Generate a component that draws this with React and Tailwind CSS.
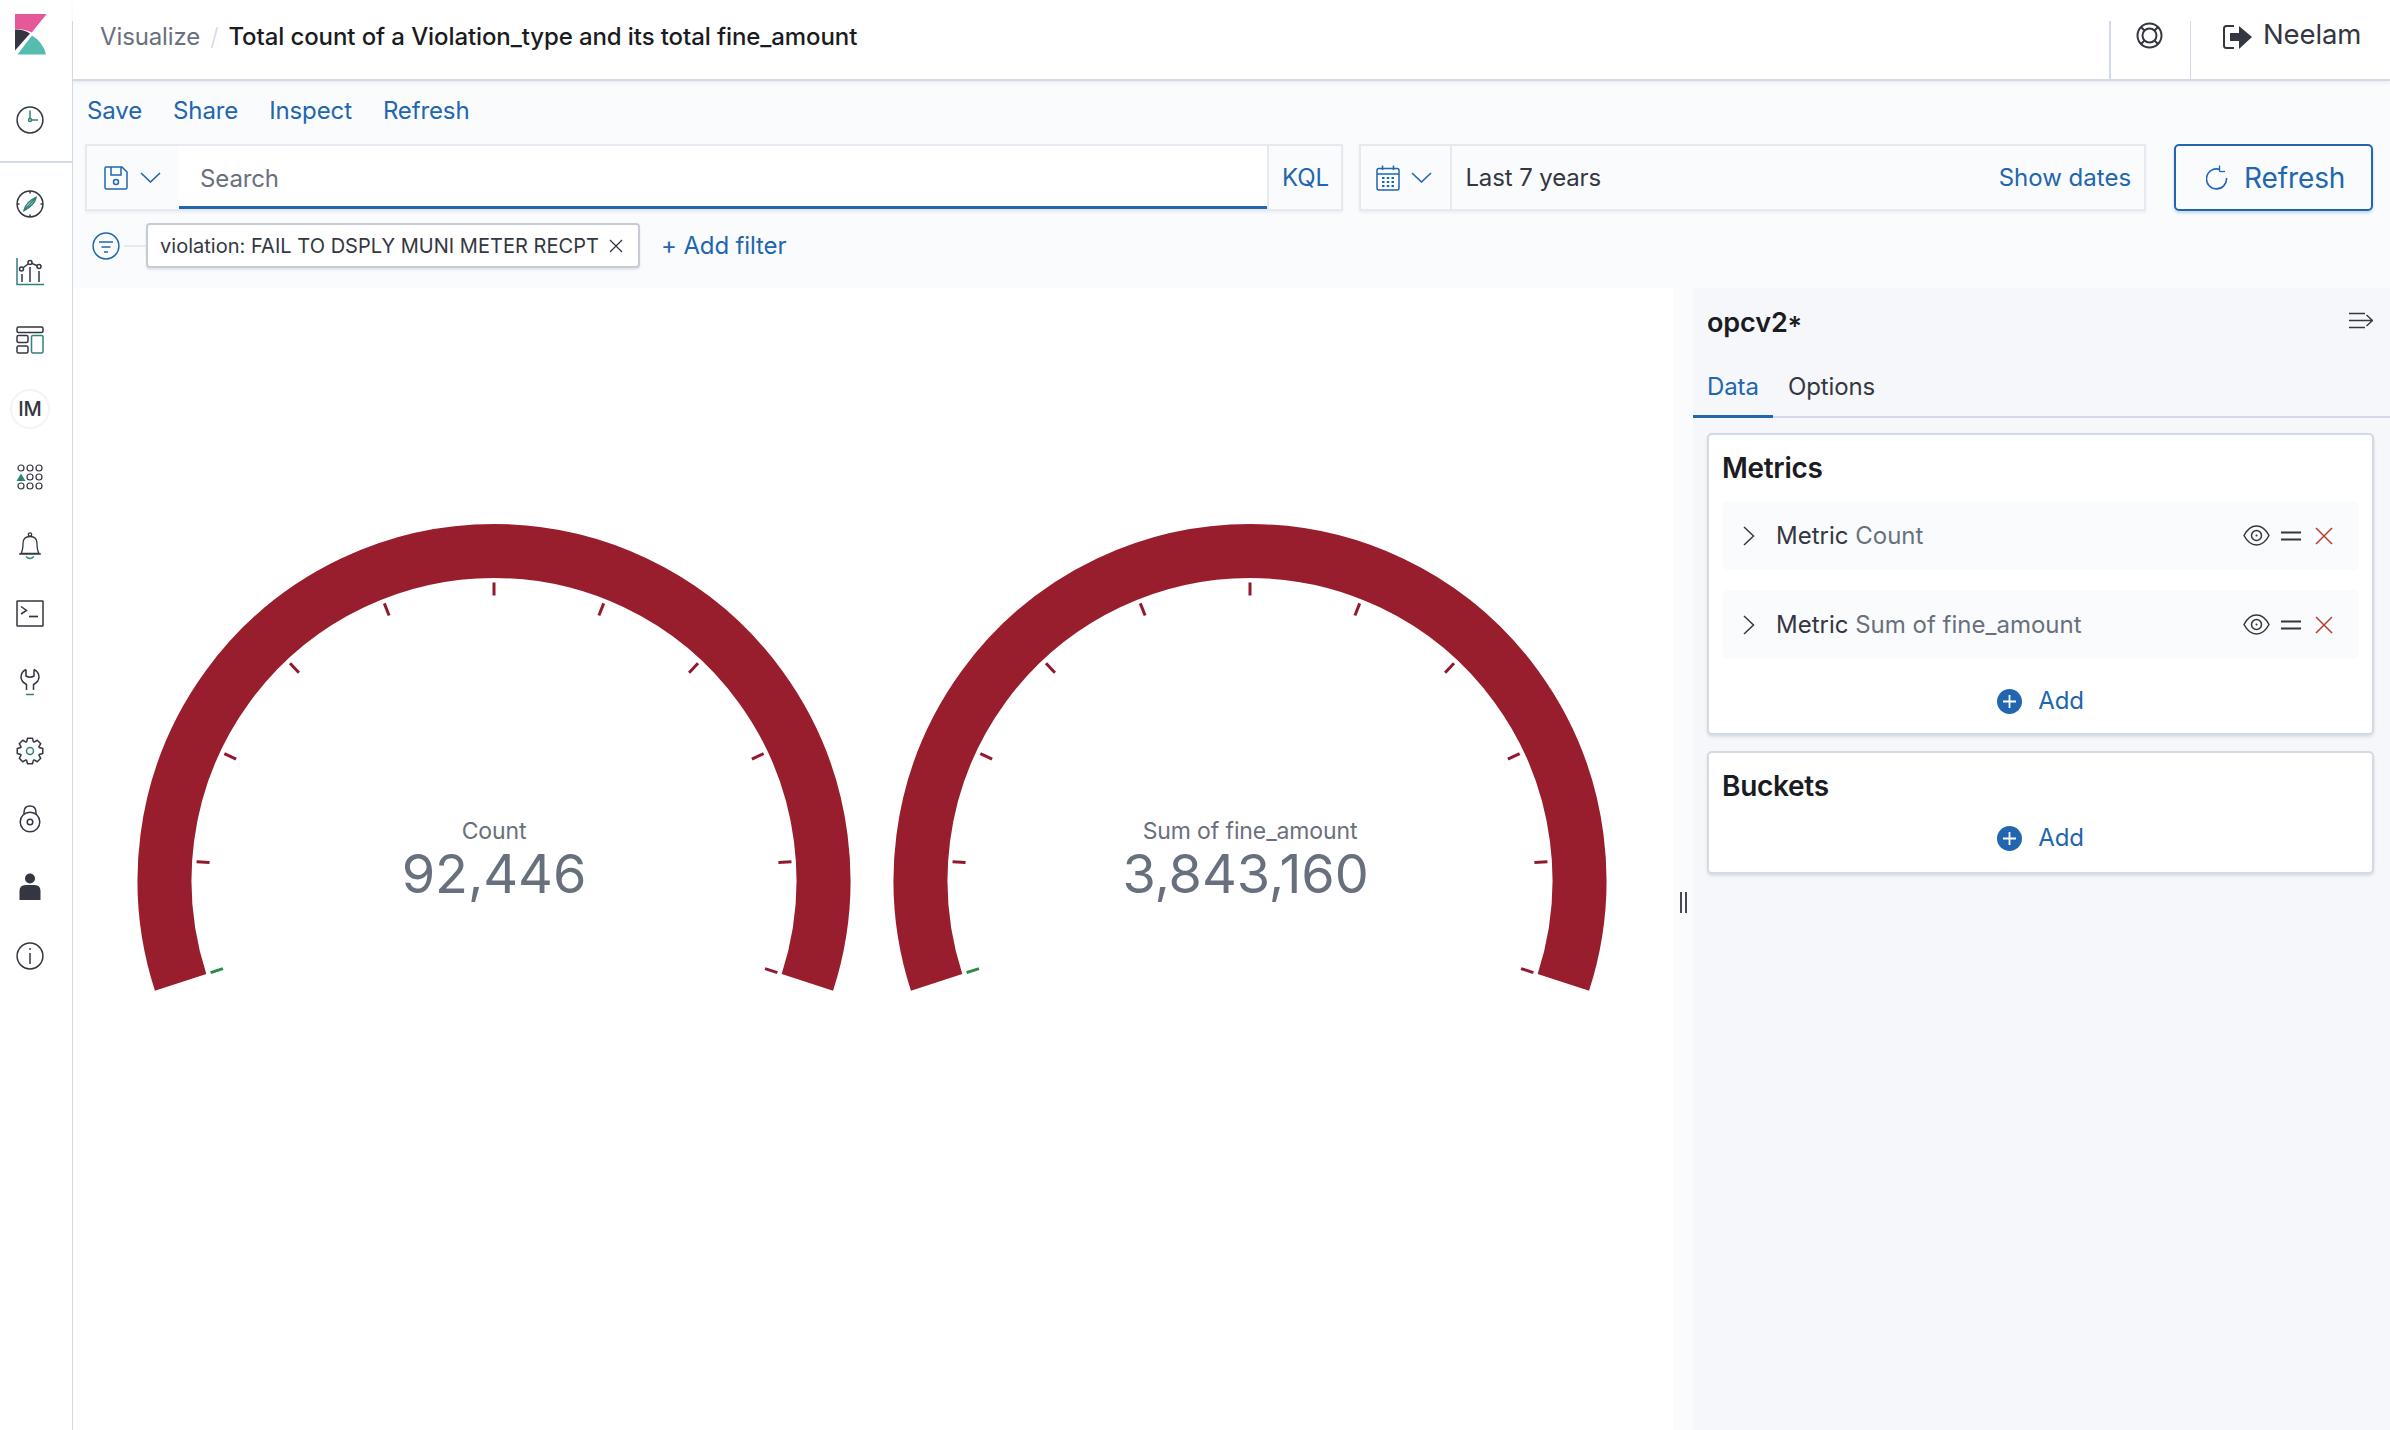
import React from 'react';

const DARK = '#343741';
const TEAL = '#2f8378';
const BLUE = '#2166ae';

function Logo() {
  return (
    <svg width="32" height="41" viewBox="15 14 32 41" className="block">
      <path d="M15 14H46.7L31.7 32.6Q24 28.5 15 29Z" fill="#e5589a" />
      <path d="M15 29.6Q23 29 30 33.5L15 50.5Z" fill="#343741" />
      <path d="M17.4 54.5L32 35.6Q43 42 46 54.5Z" fill="#55bdb0" />
    </svg>
  );
}

const Ico = ({ children, w = 28, h = 28, vb = '0 0 28 28', sw = '1.5' }) => (
  <svg width={w} height={h} viewBox={vb} fill="none" stroke={DARK} strokeWidth={sw} className="block">
    {children}
  </svg>
);

const ClockIcon = () => (
  <Ico>
    <circle cx="14" cy="14" r="12.9" />
    <path d="M14 4.5V13M15.5 14H22" stroke={TEAL} />
    <circle cx="14" cy="14" r="1.5" stroke={TEAL} />
  </Ico>
);
const CompassIcon = () => (
  <Ico>
    <circle cx="14" cy="14" r="12.9" />
    <path d="M14 1v2.500M14 24.500V27M1 14h2.500M24.500 14H27" />
    <path d="M20 7.500Q18.500 15 8 20.500Q10 12 20 7.500Z" stroke={TEAL} />
    <path d="M20 7.500L8 20.500" stroke={TEAL} />
  </Ico>
);
const ChartIcon = () => (
  <Ico>
    <path d="M1 0V26.500H28" stroke={TEAL} />
    <path d="M5.500 11L14 4.500L23 8.500" />
    <circle cx="5.500" cy="11" r="2" fill="#fff" />
    <circle cx="14" cy="4.500" r="2" fill="#fff" />
    <circle cx="23" cy="8.500" r="2" fill="#fff" />
    <path d="M6 16V24M14 9V24M23 13V24" />
  </Ico>
);
const DashIcon = () => (
  <Ico>
    <rect x="1" y="1" width="26" height="5.500" rx="1.500" />
    <rect x="1" y="9.500" width="11" height="7" rx="1.500" />
    <rect x="1" y="20" width="11" height="7" rx="1.500" />
    <rect x="15.500" y="9.500" width="11.500" height="17.500" rx="1.500" stroke={TEAL} />
  </Ico>
);
const GridIcon = () => (
  <Ico sw="1.2">
    {[[14, 5], [23, 5], [14, 14], [23, 14], [5, 23], [14, 23], [23, 23], [5, 5]].map(([x, y]) => (
      <circle key={x + '-' + y} cx={x} cy={y} r="3" />
    ))}
    <path d="M5 10.500L9.500 18H0.500Z" fill={TEAL} stroke="none" />
  </Ico>
);
const BellIcon = () => (
  <Ico sw="1.3">
    <circle cx="14" cy="2.500" r="1.700" />
    <path d="M5 21.500Q7 18 7 11.500Q7 4.500 14 4.500Q21 4.500 21 11.500Q21 18 23 21.500Z" />
    <path d="M3 22H25" />
    <path d="M10 24.500Q14 28.500 18 24.500" stroke={TEAL} />
  </Ico>
);
const TerminalIcon = () => (
  <Ico>
    <rect x="1" y="1" width="26" height="25" rx="0.500" />
    <path d="M5 6.500L10.500 10.500L5 14" />
    <path d="M13 16.500H22" strokeWidth="1.700" />
  </Ico>
);
const WrenchIcon = () => (
  <Ico>
    <path d="M10 1.500Q5 4 5 9Q5 13.500 10.500 16.500V22M18 1.500Q23 4 23 9Q23 13.500 17.500 16.500V22M10 1.500V8Q14 10.500 18 8V1.500" />
    <path d="M10 26.500H18" stroke={TEAL} />
  </Ico>
);
function gearPath() {
  const pts = [];
  for (let i = 0; i < 8; i++) {
    const a = (i * Math.PI) / 4 - Math.PI / 2;
    const at = (r, d) => `${(14 + r * Math.cos(a + d)).toFixed(2)} ${(14 + r * Math.sin(a + d)).toFixed(2)}`;
    pts.push(at(9.800, -0.36), at(13, -0.19), at(13, 0.19), at(9.800, 0.36));
  }
  return 'M' + pts.join('L') + 'Z';
}
const GearIcon = () => (
  <Ico>
    <path d={gearPath()} strokeLinejoin="round" />
    <circle cx="14" cy="14" r="3.500" stroke={TEAL} />
  </Ico>
);
const LockIcon = () => (
  <Ico>
    <path d="M8 9V7.500Q8 1 14 1Q20 1 20 7.500V9" />
    <circle cx="14" cy="17" r="9.800" />
    <circle cx="14" cy="17" r="2.800" />
  </Ico>
);
const UserIcon = () => (
  <svg width="28" height="28" viewBox="0 0 28 28" fill={DARK} className="block">
    <circle cx="14" cy="5.500" r="5" />
    <path d="M3.500 27V18Q3.500 12 9.500 12H18.500Q24.500 12 24.500 18V27Z" />
  </svg>
);
const InfoIcon = () => (
  <Ico>
    <circle cx="14" cy="14" r="12.900" />
    <path d="M14 11V22" />
    <circle cx="14" cy="7" r="0.900" fill={DARK} stroke="none" />
  </Ico>
);
const HelpIcon = () => (
  <svg width="27" height="27" viewBox="0 0 27 27" fill="none" stroke={DARK} strokeWidth="2" className="block">
    <circle cx="13.500" cy="13.500" r="12" />
    <circle cx="13.500" cy="13.500" r="7" />
    <path d="M5 5L8.500 8.500M22 5L18.500 8.500M5 22L8.500 18.500M22 22L18.500 18.500" />
  </svg>
);
const LogoutIcon = () => (
  <svg width="31" height="28" viewBox="0 0 31 28" fill="none" className="block">
    <path d="M12 3H4.500Q2 3 2 5.500V22.500Q2 25 4.500 25H12" stroke={DARK} strokeWidth="2" />
    <path d="M8 10H17V3L30 14L17 26V18H8Z" fill={DARK} />
  </svg>
);
const Chevron = ({ w = 21, h = 11, color = BLUE }) => (
  <svg width={w} height={h} viewBox="0 0 21 11" fill="none" stroke={color} strokeWidth="1.600" className="block">
    <path d="M1 1L10.500 10L20 1" />
  </svg>
);
const SaveIcon = () => (
  <svg width="24" height="24" viewBox="0 0 24 24" fill="none" stroke={BLUE} strokeWidth="1.500" className="block">
    <path d="M2 1H18L23 6V21.500Q23 23 21.500 23H2.500Q1 23 1 21.500V2Q1 1 2 1Z" />
    <path d="M7 1V9H17V1" />
    <circle cx="12" cy="16" r="2.500" />
  </svg>
);
const CalIcon = () => (
  <svg width="24" height="26" viewBox="0 0 24 26" fill="none" stroke={BLUE} strokeWidth="1.500" className="block">
    <rect x="1" y="3.500" width="22" height="21.500" rx="2" />
    <path d="M1 9H23M6.500 0.500V5M17.500 0.500V5" />
    <path d="M6 13H18M6 17H18M6 21H18" strokeWidth="2.200" strokeDasharray="2.500 2.250" />
  </svg>
);
const FilterIcon = () => (
  <svg width="28" height="28" viewBox="0 0 28 28" fill="none" stroke={BLUE} strokeWidth="1.500" className="block">
    <circle cx="14" cy="14" r="12.900" />
    <path d="M7 10H21M9.500 15H18.500M12 20H16" />
  </svg>
);
const CloseSmall = () => (
  <svg width="14" height="14" viewBox="0 0 14 14" fill="none" stroke={DARK} strokeWidth="1.300" className="block">
    <path d="M1 1L13 13M13 1L1 13" />
  </svg>
);
const RefreshIcon = () => (
  <svg width="22" height="26" viewBox="0 0 22 26" fill="none" stroke={BLUE} strokeWidth="1.600" className="block">
    <path d="M14 4.500A10 10 0 1 0 20.500 13" />
    <path d="M13.500 0.500V6.500" strokeWidth="1.300" />
    <path d="M13.500 6.500H19" strokeWidth="1.300" />
  </svg>
);
const CollapseIcon = () => (
  <svg width="25" height="17" viewBox="0 0 25 17" fill="none" stroke={DARK} strokeWidth="1.400" className="block">
    <path d="M1 1.500H17M1 8.500H24M1 15.500H17M18.500 3L24.500 8.500L18.500 14" />
  </svg>
);
const RowChevron = () => (
  <svg width="12" height="20" viewBox="0 0 12 20" fill="none" stroke={DARK} strokeWidth="1.500" className="block">
    <path d="M1 1L10.500 10L1 19" />
  </svg>
);
const EyeIcon = () => (
  <svg width="27" height="21" viewBox="0 0 27 21" fill="none" stroke={DARK} strokeWidth="1.500" className="block">
    <path d="M1 10.500Q6 1 13.500 1Q21 1 26 10.500Q21 20 13.500 20Q6 20 1 10.500Z" />
    <circle cx="13.500" cy="10.500" r="5" />
    <circle cx="13.500" cy="10.500" r="1" fill={DARK} stroke="none" />
  </svg>
);
const DragIcon = () => (
  <svg width="20" height="10" viewBox="0 0 20 10" fill="none" stroke={DARK} strokeWidth="1.800" className="block">
    <path d="M0 1.500H20M0 8.500H20" />
  </svg>
);
const RemoveIcon = () => (
  <svg width="18" height="18" viewBox="0 0 18 18" fill="none" stroke="#bd3a2c" strokeWidth="1.500" className="block">
    <path d="M1 1L17 17M17 1L1 17" />
  </svg>
);
const PlusCircle = () => (
  <svg width="25" height="25" viewBox="0 0 25 25" className="block">
    <circle cx="12.500" cy="12.500" r="12.500" fill={BLUE} />
    <path d="M12.500 6V19M6 12.500H19" stroke="#fff" strokeWidth="1.800" />
  </svg>
);

const navItems = [
  <ClockIcon />, null, <CompassIcon />, <ChartIcon />, <DashIcon />, 'IM', <GridIcon />, <BellIcon />,
  <TerminalIcon />, <WrenchIcon />, <GearIcon />, <LockIcon />, <UserIcon />, <InfoIcon />,
];

function Sidebar() {
  return (
    <div className="w-[73px] shrink-0 flex flex-col pt-[21px] bg-white">
      <div className="flex-1 border-r border-[#d3dae6] flex flex-col items-stretch">
        <div className="-mt-[7px] pl-[15px] h-[72px] shrink-0"><Logo /></div>
        {navItems.map((it, i) => {
          if (it === null) return <div key={i} className="h-[2px] bg-[#d3dae6] -mr-px shrink-0 mt-[7px] mb-[6px]" />;
          if (it === 'IM') return (
            <div key={i} className="h-[68.4px] shrink-0 flex items-center pl-[10px]">
              <div className="w-[40px] h-[40px] rounded-full border-2 border-[#f3f4f7] flex items-center justify-center text-[20px] font-medium text-[#343741]">IM</div>
            </div>
          );
          return <div key={i} className="h-[68.4px] shrink-0 flex items-center pl-[16px]">{it}</div>;
        })}
      </div>
    </div>
  );
}

function Gauge({ label, value, valueX = 378 }) {
  const cx = 378, cy = 380.5;
  const pt = (r, deg) => {
    const a = (deg * Math.PI) / 180;
    return [cx + r * Math.sin(a), cy - r * Math.cos(a)];
  };
  const [x0, y0] = pt(329.5, -108);
  const [x1, y1] = pt(329.5, 108);
  const ticks = Array.from({ length: 11 }, (_, i) => -108 + i * 21.6);
  return (
    <svg width="756" height="720" viewBox="0 0 756 720" className="block shrink-0">
      <path d={`M${x0} ${y0}A329.500 329.500 0 1 1 ${x1} ${y1}`} fill="none" stroke="#981e2e" strokeWidth="54" />
      {ticks.map((d, i) => {
        const [a, b] = pt(298, d);
        const [c, e] = pt(285, d);
        return <line key={i} x1={a} y1={b} x2={c} y2={e} stroke={i === 0 ? '#2a8a4a' : '#8f1a2d'} strokeWidth="3" />;
      })}
      <text x="378" y="339" textAnchor="middle" fontSize="23" fill="#69707d" style={{ fontFamily: 'Inter, sans-serif' }}>{label}</text>
      <text x={valueX} y="393" textAnchor="middle" fontSize="54" fill="#69707d" style={{ fontFamily: 'Inter, sans-serif' }}>{value}</text>
    </svg>
  );
}

function MetricRow({ name }) {
  return (
    <div className="h-[69px] rounded-[6px] bg-[#fafbfd] flex items-center pl-[21px] pr-[26px]">
      <RowChevron />
      <div className="ml-[21px] flex-1 text-[24px] text-[#343741] tracking-normal">Metric <span className="text-[#69707d]">{name}</span></div>
      <EyeIcon />
      <div className="ml-[11px]"><DragIcon /></div>
      <div className="ml-[14px]"><RemoveIcon /></div>
    </div>
  );
}

function AddRow() {
  return (
    <div className="flex items-center justify-center gap-[16px] text-[24px] text-[#2166ae]">
      <PlusCircle /> Add
    </div>
  );
}

export default function App() {
  return (
    <div className="w-[2390px] h-[1430px] flex overflow-hidden bg-white text-[#343741] tracking-[-0.12px]" style={{ fontFamily: 'Inter, sans-serif' }}>
      <Sidebar />
      <div className="flex-1 flex flex-col min-w-0">
        {/* Header */}
        <div className="h-[81px] shrink-0 flex pt-[21px] bg-white border-b-2 border-[#d3dae6] shadow-[0_2px_3px_rgba(152,162,179,0.15)] relative z-10">
          <div className="flex-1 flex items-start pl-[27px] text-[24px] leading-[32px]">
            <span className="text-[#69707d]">Visualize</span>
            <span className="mx-[10px] text-[#d3dae6] font-light">/</span>
            <span className="font-medium text-[#1a1c21] tracking-[-0.1px]">Total count of a Violation_type and its total fine_amount</span>
          </div>
          <div className="w-[81px] border-l-2 border-[#d3dae6] flex justify-center items-start pt-px pr-[2px]"><HelpIcon /></div>
          <div className="w-[200px] border-l border-[#d3dae6] flex items-start pl-[31px]">
            <div className="mt-[2px]"><LogoutIcon /></div>
            <span className="ml-[10px] text-[27.500px] leading-[27px]">Neelam</span>
          </div>
        </div>

        {/* Toolbar */}
        <div className="h-[207px] shrink-0 bg-[#fafbfd] pl-[12px] pr-[17px]">
          <div className="h-[58px] pl-[2px] flex items-center gap-[31px] text-[24px] text-[#2166ae] pt-[1px]">
            <span>Save</span>
            <span>Share</span>
            <span>Inspect</span>
            <span>Refresh</span>
          </div>
          <div className="mt-[5px] h-[67px] flex items-stretch">
            <div className="w-[1259px] flex border-2 border-[#e6e9f0] bg-[#fafbfd] shadow-[0_2px_2px_rgba(152,162,179,0.12)]">
              <div className="w-[92px] flex items-center pl-[17px] gap-[12px]"><SaveIcon /><Chevron /></div>
              <div className="flex-1 bg-white border-b-[3px] border-[#2166ae] flex items-center pl-[21px] pt-[5px] text-[24px] text-[#69707d]">Search</div>
              <div className="w-[74px] border-l-2 border-[#e6e9f0] flex items-center justify-center text-[24px] text-[#2166ae]">KQL</div>
            </div>
            <div className="ml-[16px] w-[787px] flex items-center border-2 border-[#e6e9f0] shadow-[0_2px_2px_rgba(152,162,179,0.12)] pr-[13px]">
              <div className="w-[91px] h-full border-r-2 border-[#e6e9f0] flex items-center pl-[15px] gap-[11px]"><CalIcon /><Chevron /></div>
              <span className="ml-[13px] flex-1 text-[24px] text-[#343741]">Last 7 years</span>
              <span className="text-[24px] text-[#2166ae] tracking-normal">Show dates</span>
            </div>
            <div className="ml-[28px] w-[199px] border-2 border-[#2166ae] rounded-[5px] flex items-center pl-[30px] gap-[16px] text-[28px] text-[#2166ae] shadow-[0_2px_3px_rgba(33,102,174,0.25)]">
              <RefreshIcon /> Refresh
            </div>
          </div>
          <div className="mt-[12px] h-[45px] flex items-center">
            <div className="ml-[7px]"><FilterIcon /></div>
            <div className="w-[22px] h-[2px] bg-[#e6e9f0] ml-[4px]" />
            <div className="h-[45px] w-[494px] bg-white border-2 border-[#c6cbd6] rounded-[4px] shadow-[0_2px_2px_rgba(152,162,179,0.25)] flex items-center pl-[12px] text-[20px] text-[#343741] tracking-[0.03px]">
              <span className="flex-1 whitespace-nowrap">violation: FAIL TO DSPLY MUNI METER RECPT</span>
              <div className="mr-[15px]"><CloseSmall /></div>
            </div>
            <span className="ml-[21px] text-[24px] text-[#2166ae]">+ Add filter</span>
          </div>
        </div>

        {/* Body */}
        <div className="flex-1 flex min-h-0">
          <div className="w-[1600px] shrink-0 bg-white pl-[43px] pt-[212px] flex items-start">
            <Gauge label="Count" value="92,446" />
            <Gauge label="Sum of fine_amount" value="3,843,160" valueX={373.500} />
          </div>
          <div className="w-[20px] shrink-0 bg-[#fafbfd] pt-[604px] flex justify-center gap-[3px]">
            <div className="w-[2px] h-[21px] bg-[#454853]" />
            <div className="w-[2px] h-[21px] bg-[#454853]" />
          </div>
          <div className="flex-1 bg-[#f5f7fa] flex flex-col">
            <div className="h-[67px] flex items-start justify-between pl-[14px] pr-[17px] pt-[17px]">
              <span className="text-[27px] leading-[36px] font-semibold text-[#1a1c21]">opcv2<span className="inline-block translate-y-[4px]">*</span></span>
              <div className="mt-[7px]"><CollapseIcon /></div>
            </div>
            <div className="h-[63px] flex items-stretch border-b-2 border-[#d3dae6] text-[24px]">
              <div className="w-[80px] pl-[14px] pt-[3px] flex items-center text-[#2166ae] border-b-[3px] border-[#2166ae] -mb-[2px]">Data</div>
              <div className="pl-[15px] pt-[2px] flex items-center">Options</div>
            </div>
            <div className="mt-[15px] ml-[14px] w-[667px] h-[302px] bg-white border-2 border-[#d3dae6] rounded-[5px] shadow-[0_2px_3px_rgba(152,162,179,0.3)] px-[13px]">
              <div className="h-[66px] flex items-center text-[28px] font-semibold text-[#1a1c21] tracking-[-0.3px]">Metrics</div>
              <MetricRow name="Count" />
              <div className="mt-[20px]"><MetricRow name="Sum of fine_amount" /></div>
              <div className="mt-[24px]"><AddRow /></div>
            </div>
            <div className="mt-[16px] ml-[14px] w-[667px] h-[123px] bg-white border-2 border-[#d3dae6] rounded-[5px] shadow-[0_2px_3px_rgba(152,162,179,0.3)] px-[13px]">
              <div className="h-[66px] flex items-center text-[28px] font-semibold text-[#1a1c21] tracking-[-0.3px]">Buckets</div>
              <div className="pt-[1px]"><AddRow /></div>
            </div>
          </div>
        </div>
      </div>
    </div>
  );
}
